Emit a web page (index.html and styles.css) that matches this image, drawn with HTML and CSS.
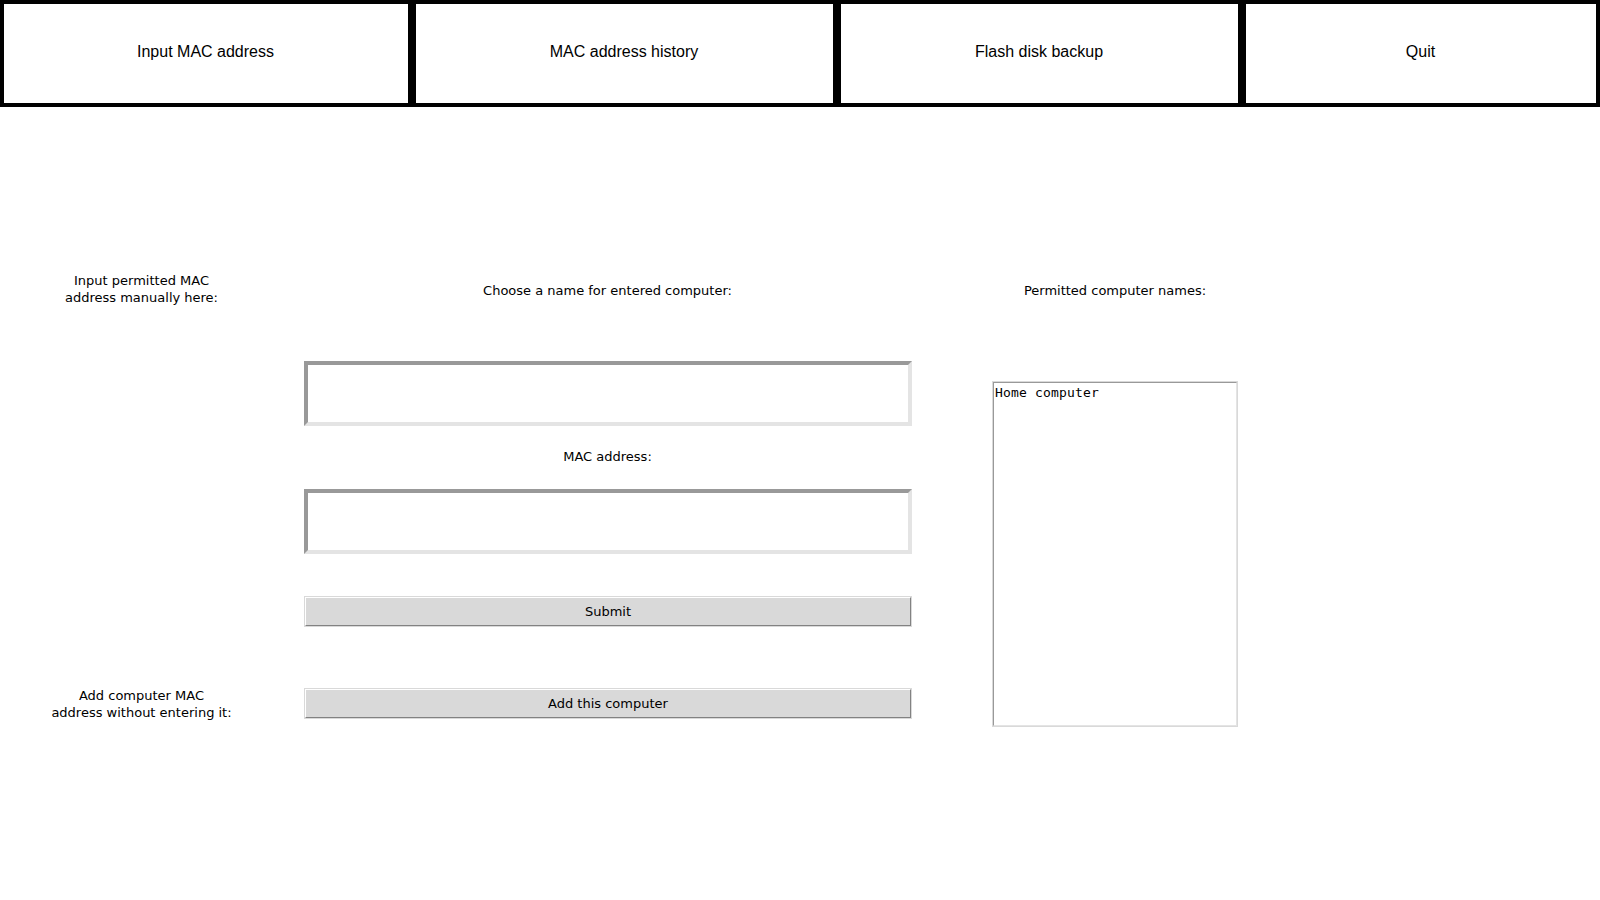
FILE: index.html
```html
<!DOCTYPE html>
<html lang="en">
<head>
<meta charset="utf-8">
<title>MAC address manager</title>
<link rel="stylesheet" href="styles.css">
</head>
<body>
<nav class="nav">
  <button class="nav-btn nav-input">Input MAC address</button>
  <button class="nav-btn nav-history">MAC address history</button>
  <button class="nav-btn nav-backup">Flash disk backup</button>
  <button class="nav-btn nav-quit">Quit</button>
</nav>
<main class="form">
  <div class="label label-two row-head col-left">Input permitted MAC<br>address manually here:</div>
  <div class="label row-head col-mid">Choose a name for entered computer:</div>
  <div class="label row-head col-right">Permitted computer names:</div>

  <input class="entry row-name col-mid" type="text">
  <div class="label label-mac row-mac-label col-mid">MAC address:</div>
  <input class="entry row-mac col-mid" type="text">
  <button class="tk-btn btn-submit row-submit col-mid">Submit</button>

  <div class="label label-two label-add row-add col-left">Add computer MAC<br>address without entering it:</div>
  <button class="tk-btn row-add col-mid">Add this computer</button>

  <div class="listbox col-right">
    <ul class="listbox-inner">
      <li>Home computer</li>
    </ul>
  </div>
</main>
</body>
</html>
```
FILE: styles.css
```css
html, body {
  margin: 0;
  padding: 0;
  background: #ffffff;
}

body {
  font-family: "DejaVu Sans", "Noto Sans", sans-serif;
  font-size: 13px;
  color: #000000;
}

/* ---------- top navigation ---------- */
.nav {
  display: flex;
  height: 107px;
}

.nav-btn {
  box-sizing: border-box;
  height: 107px;
  margin: 0;
  padding: 0 1px 4px 0;
  border: 4px solid #000000;
  background: #ffffff;
  color: #000000;
  font-family: "Liberation Sans", Arial, sans-serif;
  font-size: 16px;
  display: flex;
  align-items: center;
  justify-content: center;
  flex: none;
}

.nav-input   { width: 412px; }
.nav-history { width: 425px; }
.nav-backup  { width: 405px; }
.nav-quit    { width: 358px; }

/* ---------- form grid ---------- */
.form {
  display: grid;
  grid-template-columns: 283px 649px 366px;
  grid-template-rows: 40px 51px 65px 63px 65px 42px 31px 61px 31px 30px;
  padding-top: 163px;
}

.col-left  { grid-column: 1; }
.col-mid   { grid-column: 2; }
.col-right { grid-column: 3; }

.row-head      { grid-row: 1; }
.row-name      { grid-row: 3; }
.row-mac-label { grid-row: 4; }
.row-mac       { grid-row: 5; }
.row-submit    { grid-row: 7; }
.row-add       { grid-row: 9; }

.label {
  align-self: center;
  justify-self: center;
  text-align: center;
  white-space: nowrap;
}

.label-two {
  line-height: 16.6px;
}

.label-mac {
  margin-bottom: 2px;
}

.label-add {
  margin-top: 2px;
}

/* ---------- entries ---------- */
.entry {
  box-sizing: border-box;
  width: 608px;
  height: 65px;
  margin: 0 0 0 21px;
  padding: 0 4px;
  justify-self: start;
  align-self: stretch;
  background: #ffffff;
  border-style: solid;
  border-width: 4px;
  border-color: #999999 #e4e4e4 #e4e4e4 #999999;
  outline: none;
  font-family: "DejaVu Sans", sans-serif;
  font-size: 13px;
}

/* ---------- tk style buttons ---------- */
.tk-btn {
  box-sizing: border-box;
  width: 606px;
  height: 29px;
  margin: 0 0 0 22px;
  padding: 0;
  justify-self: start;
  align-self: center;
  background: #d9d9d9;
  border-style: solid;
  border-width: 1px;
  border-color: #ffffff #828282 #828282 #ffffff;
  box-shadow: 0 0 0 1px #d9d9d9;
  font-family: "DejaVu Sans", sans-serif;
  font-size: 13px;
  color: #000000;
}

.btn-submit {
  padding-bottom: 1px;
}

/* ---------- listbox ---------- */
.listbox {
  grid-row: 2 / 11;
  align-self: start;
  justify-self: center;
  box-sizing: border-box;
  width: 246px;
  height: 346px;
  margin-top: 71px;
  border: 1px solid #d9d9d9;
}

.listbox-inner {
  box-sizing: border-box;
  height: 100%;
  margin: 0;
  padding: 2px 0 0 1px;
  list-style: none;
  background: #ffffff;
  border-style: solid;
  border-width: 1px;
  border-color: #999999 #e4e4e4 #e4e4e4 #999999;
  font-family: "DejaVu Sans Mono", "Liberation Mono", monospace;
  font-size: 13px;
  letter-spacing: 0.17px;
  line-height: normal;
}
```
